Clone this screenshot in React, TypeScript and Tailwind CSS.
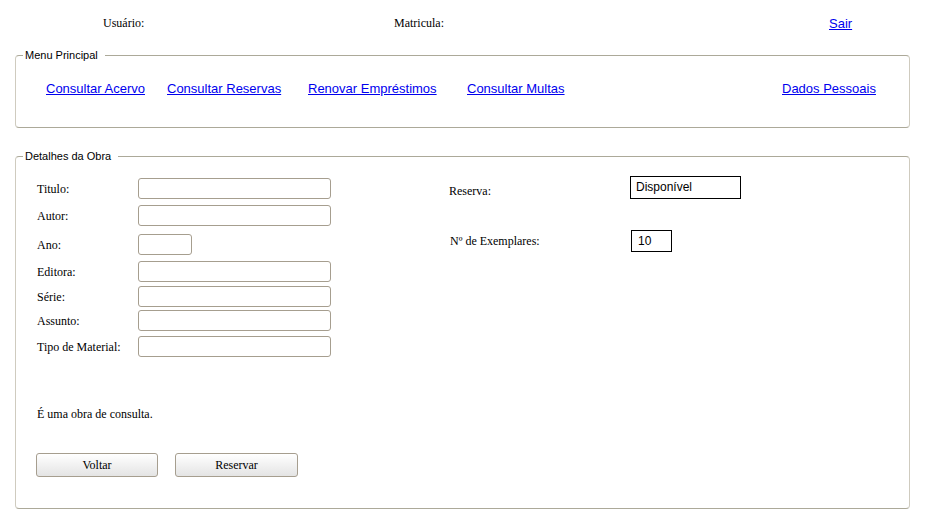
const serif = "font-['Liberation_Serif','Times_New_Roman',serif] text-[12px] text-black";
const sans = "font-['Liberation_Sans',Arial,sans-serif]";

const MENU_LINKS = [
  { label: "Consultar Acervo", width: "w-[121px]" },
  { label: "Consultar Reservas", width: "w-[141px]" },
  { label: "Renovar Empréstimos", width: "w-[159px]" },
  { label: "Consultar Multas", width: "w-[315px]" },
  { label: "Dados Pessoais", width: "" },
];

const FIELDS = [
  { label: "Titulo:", mt: "mt-0", w: "w-[193px]" },
  { label: "Autor:", mt: "mt-[6px]", w: "w-[193px]" },
  { label: "Ano:", mt: "mt-[8px]", w: "w-[54px]" },
  { label: "Editora:", mt: "mt-[6px]", w: "w-[193px]" },
  { label: "Série:", mt: "mt-[4px]", w: "w-[193px]" },
  { label: "Assunto:", mt: "mt-[3px]", w: "w-[193px]" },
  { label: "Tipo de Material:", mt: "mt-[5px]", w: "w-[193px]" },
];

function Box({ title, className, children }: { title: string; className?: string; children: React.ReactNode }) {
  return (
    <fieldset
      className={`mx-[15px] rounded-[4px] border border-[#cfcbbf] border-t-[#aca999] border-b-[#aca999] ${className ?? ""}`}
    >
      <legend className={`${sans} ml-[7px] pl-[2px] pr-[7px] text-[11px] leading-[13px] text-black`}>{title}</legend>
      {children}
    </fieldset>
  );
}

function Link({ children }: { children: React.ReactNode }) {
  return (
    <a href="#" className={`${sans} text-[13px] leading-[15px] text-[#0000ee] underline`}>
      {children}
    </a>
  );
}

export default function App() {
  return (
    <div className="h-[523px] w-[925px] bg-white">
      <div className={`flex h-[49px] pl-[103px] pt-[16px] ${serif} leading-[14px]`}>
        <span className="w-[291px]">Usuário:</span>
        <span className="w-[435px]">Matricula:</span>
        <Link>Sair</Link>
      </div>

      <Box title="Menu Principal" className="h-[79px]">
        <div className="flex pl-[30px] pt-[13px]">
          {MENU_LINKS.map((l) => (
            <div key={l.label} className={l.width}>
              <Link>{l.label}</Link>
            </div>
          ))}
        </div>
      </Box>

      <Box title="Detalhes da Obra" className="mt-[22px] h-[359px]">
        <div className="flex">
          <div className="w-[315px] pl-[21px] pt-[15px]">
            {FIELDS.map((f) => (
              <div key={f.label} className={`flex h-[21px] items-center ${f.mt}`}>
                <span className={`${serif} w-[101px] leading-[14px]`}>{f.label}</span>
                <input
                  className={`h-[21px] ${f.w} rounded-[3px] border border-[#a69e8f] bg-white`}
                />
              </div>
            ))}
            <p className={`${serif} mt-[50px] leading-[14px]`}>É uma obra de consulta.</p>
            <div className="-ml-px mt-[32px] flex gap-[17px]">
              {[
                { label: "Voltar", w: "w-[122px]" },
                { label: "Reservar", w: "w-[123px]" },
              ].map((b) => (
                <button
                  key={b.label}
                  className={`${serif} h-[24px] ${b.w} rounded-[3px] border border-[#a69e8f] bg-linear-to-b from-white to-[#e4e4e4]`}
                >
                  {b.label}
                </button>
              ))}
            </div>
          </div>

          <div className="ml-[118px] pt-[13px]">
            <div className="flex h-[23px] items-center">
              <span className={`${serif} mt-[6px] w-[181px] leading-[14px]`}>Reserva:</span>
              <div className={`${sans} h-[23px] w-[111px] border border-black px-[5px] text-[12px] leading-[21px]`}>
                Disponível
              </div>
            </div>
            <div className="mt-[31px] flex h-[22px] items-center pl-[1px]">
              <span className={`${serif} w-[181px] leading-[14px]`}>Nº de Exemplares:</span>
              <div className={`${sans} h-[22px] w-[41px] border border-black px-[6px] text-[12px] leading-[20px]`}>
                10
              </div>
            </div>
          </div>
        </div>
      </Box>
    </div>
  );
}
